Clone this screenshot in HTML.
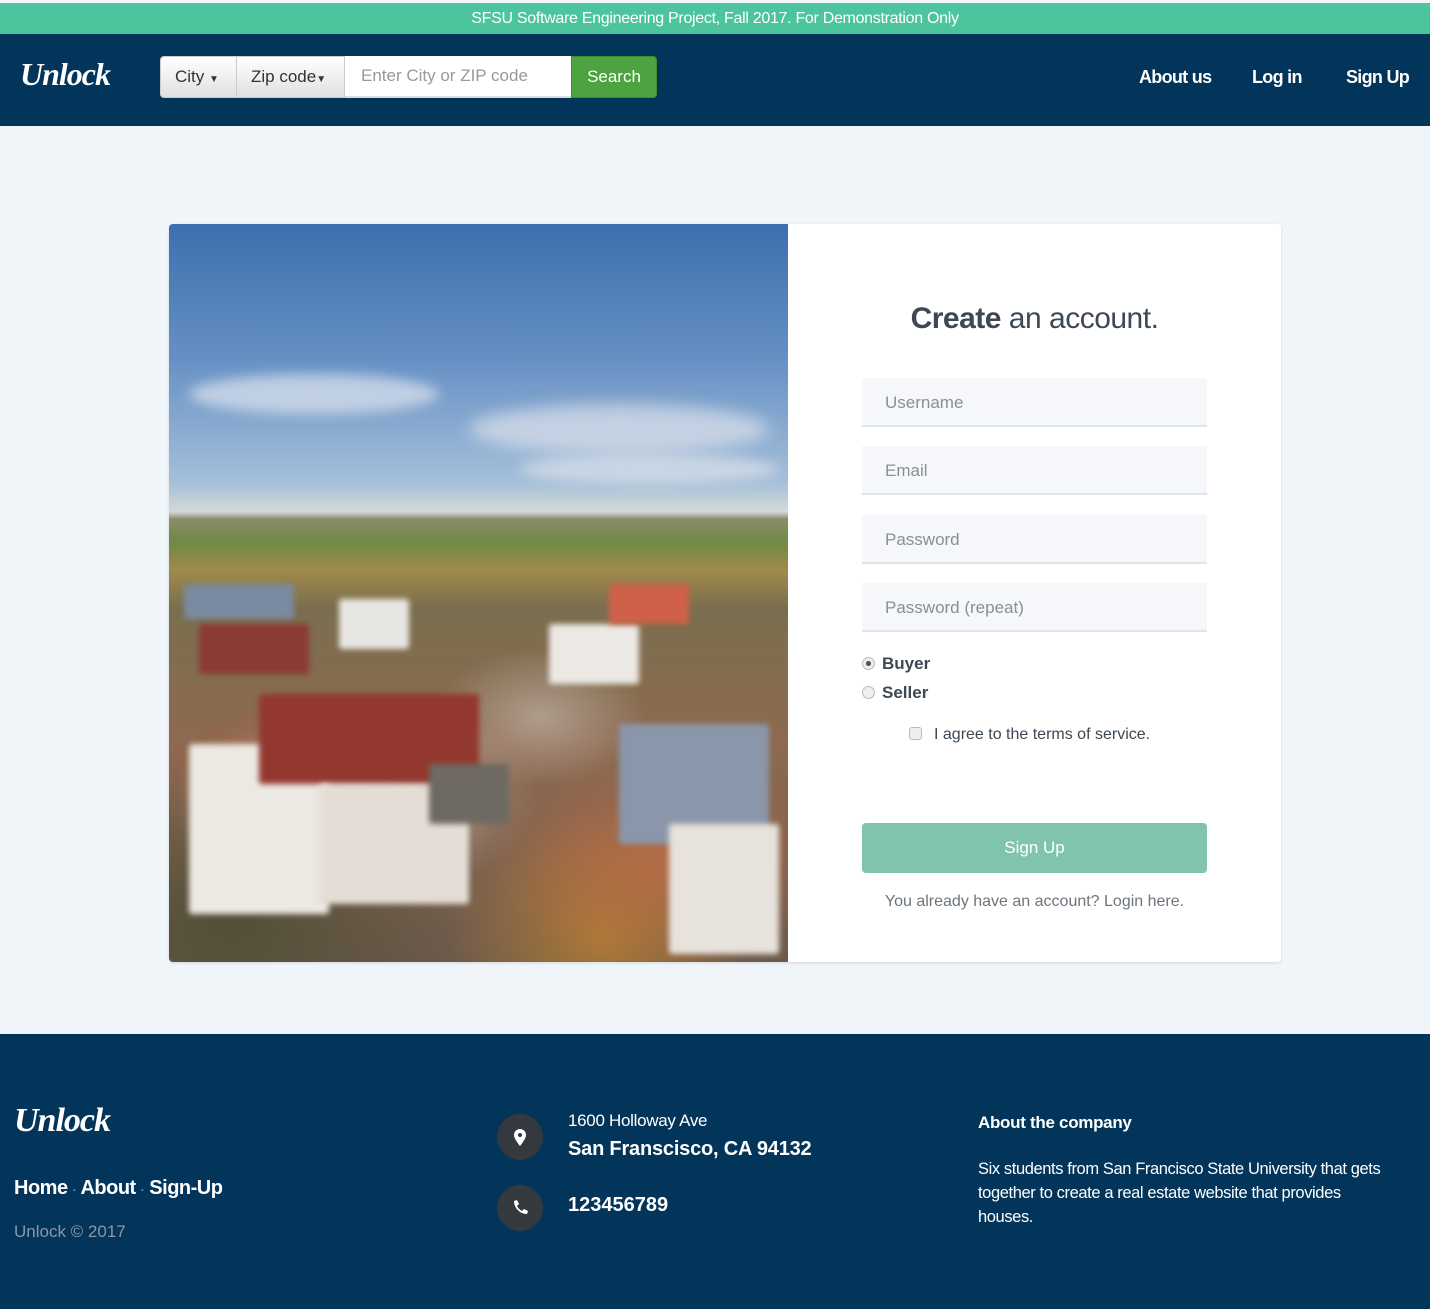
<!DOCTYPE html>
<html><head><meta charset="utf-8"><style>
*{box-sizing:border-box;margin:0;padding:0}
body{width:1430px;height:1309px;background:#f0f5fa;font-family:"Liberation Sans",Arial,sans-serif;position:relative;overflow:hidden}
.banner{position:absolute;top:3px;left:0;width:1430px;height:31px;background:#4cc49d;color:#fff;text-align:center;font-size:16px;line-height:31px;letter-spacing:-0.3px}
.nav{position:absolute;top:34px;left:0;width:1430px;height:92px;background:#033459}
.logo{position:absolute;font-family:"Liberation Serif",serif;font-style:italic;font-weight:bold;color:#fff;font-size:32px;letter-spacing:-1px}
.sb{position:absolute;top:22px;height:42px;font-size:17px;line-height:40px;color:#333}
.btn{background:linear-gradient(#fff,#e0e0e0);border:1px solid #ccc;padding:0 14px}
.nl{position:absolute;top:33px;color:#fff;font-size:18px;font-weight:bold;letter-spacing:-0.7px}
.card{position:absolute;left:169px;top:224px;width:1112px;height:738px;background:#fff;border-radius:4px;box-shadow:0 1px 3px rgba(0,0,0,.12);overflow:hidden}
.img{position:absolute;left:0;top:0;width:619px;height:738px;overflow:hidden;background:linear-gradient(180deg,#3d6fae 0%,#6590c4 18%,#a5bfd9 35%,#d4d8d6 39%,#8a8c6a 40%,#6f8a45 43%,#a08a4a 47%,#7a6e4e 52%,#8e6a50 70%,#6d5a4c 100%)}
.input{position:absolute;left:693px;width:345px;height:49px;background:#f5f7fb;border-bottom:2px solid #dfe5ec;color:#8a8f96;font-size:17px;line-height:49px;padding-left:23px}
.footer{position:absolute;top:1034px;left:0;width:1430px;height:275px;background:#033459;color:#fff}
.circ{position:absolute;left:497px;width:46px;height:46px;border-radius:50%;background:#33393f}
.b{position:absolute;border-radius:3px;filter:blur(3px)}
</style></head><body>
<div class="banner">SFSU Software Engineering Project, Fall 2017. For Demonstration Only</div>
<div class="nav">
 <div class="logo" style="left:20px;top:22px">Unlock</div>
 <div class="sb btn" style="left:160px;width:77px;border-radius:4px 0 0 4px">City <span style="font-size:10px">▼</span></div>
 <div class="sb btn" style="left:236px;width:109px">Zip code<span style="font-size:10px">▼</span></div>
 <div class="sb" style="left:345px;width:226px;background:#fff;color:#999;padding-left:16px;border-bottom:2px solid #ddd">Enter City or ZIP code</div>
 <div class="sb" style="left:571px;width:86px;background:#4ca33f;color:#fff;text-align:center;border-radius:0 4px 4px 0;border:1px solid #3e8f33">Search</div>
 <div class="nl" style="left:1139px">About us</div>
 <div class="nl" style="left:1252px">Log in</div>
 <div class="nl" style="left:1346px">Sign Up</div>
</div>
<div class="card">
 <div class="img">
  <div style="position:absolute;left:20px;top:150px;width:250px;height:40px;border-radius:50%;background:rgba(240,240,245,.6);filter:blur(6px)"></div>
  <div style="position:absolute;left:300px;top:180px;width:300px;height:50px;border-radius:50%;background:rgba(235,235,240,.6);filter:blur(8px)"></div>
  <div style="position:absolute;left:350px;top:230px;width:260px;height:30px;border-radius:50%;background:rgba(230,232,236,.6);filter:blur(6px)"></div>
  <div style="position:absolute;left:0;top:330px;width:619px;height:408px;background:radial-gradient(ellipse at 30% 60%,rgba(240,235,230,.5),transparent 30%),radial-gradient(ellipse at 25% 55%,rgba(160,50,40,.6),transparent 25%),radial-gradient(ellipse at 80% 75%,rgba(220,110,70,.5),transparent 25%),radial-gradient(ellipse at 60% 40%,rgba(230,230,230,.4),transparent 20%),radial-gradient(ellipse at 70% 95%,rgba(210,140,40,.6),transparent 25%),radial-gradient(ellipse at 10% 90%,rgba(60,70,40,.6),transparent 30%)"></div>
  <div class="b" style="left:15px;top:360px;width:110px;height:35px;background:#7a8aa0"></div>
  <div class="b" style="left:170px;top:375px;width:70px;height:50px;background:#e8e6e2"></div>
  <div class="b" style="left:380px;top:400px;width:90px;height:60px;background:#ece8e4"></div>
  <div class="b" style="left:440px;top:360px;width:80px;height:40px;background:#d0604a"></div>
  <div class="b" style="left:30px;top:400px;width:110px;height:50px;background:#8c3a34"></div>
  <div class="b" style="left:20px;top:520px;width:140px;height:170px;background:#ece8e2"></div>
  <div class="b" style="left:90px;top:470px;width:220px;height:90px;background:#93382f"></div>
  <div class="b" style="left:150px;top:560px;width:150px;height:120px;background:#e4ddd6"></div>
  <div class="b" style="left:450px;top:500px;width:150px;height:120px;background:#8a97aa"></div>
  <div class="b" style="left:500px;top:600px;width:110px;height:130px;background:#e7e2dc"></div>
  <div class="b" style="left:260px;top:540px;width:80px;height:60px;background:#6e6a62"></div>
 </div>
 <div style="position:absolute;left:619px;width:493px;top:78px;text-align:center;font-size:30px;color:#3d4852;letter-spacing:-0.5px"><b>Create</b> an account.</div>
 <div class="input" style="top:154px">Username</div>
 <div class="input" style="top:222px">Email</div>
 <div class="input" style="top:291px">Password</div>
 <div class="input" style="top:359px">Password (repeat)</div>
 <div style="position:absolute;left:693px;top:430px;font-size:17px;font-weight:bold;color:#3d4852"><span style="display:inline-block;width:13px;height:13px;border-radius:50%;border:1px solid #bbb;background:radial-gradient(#555 30%,#eee 35%);vertical-align:-1px;margin-right:7px"></span>Buyer</div>
 <div style="position:absolute;left:693px;top:459px;font-size:17px;font-weight:bold;color:#3d4852"><span style="display:inline-block;width:13px;height:13px;border-radius:50%;border:1px solid #bbb;background:#eee;vertical-align:-1px;margin-right:7px"></span>Seller</div>
 <div style="position:absolute;left:740px;top:502px;font-size:16px;color:#3d4852"><span style="display:inline-block;width:13px;height:13px;border-radius:3px;border:1px solid #bbb;background:#eee;vertical-align:-1px;margin-right:12px"></span>I agree to the terms of service.</div>
 <div style="position:absolute;left:693px;top:599px;width:345px;height:50px;background:#80c4ac;border-radius:4px;color:#fff;text-align:center;line-height:50px;font-size:17px">Sign Up</div>
 <div style="position:absolute;left:619px;width:493px;top:669px;text-align:center;font-size:16px;color:#6c757d">You already have an account? Login here.</div>
</div>
<div class="footer">
 <div class="logo" style="left:14px;top:68px;font-size:34px">Unlock</div>
 <div style="position:absolute;left:14px;top:143px;font-size:20px;font-weight:bold;letter-spacing:-0.5px">Home <span style="color:#3ba0c9;font-size:12px">·</span> About <span style="color:#3ba0c9;font-size:12px">·</span> Sign-Up</div>
 <div style="position:absolute;left:14px;top:188px;font-size:17px;color:#8a97a5">Unlock © 2017</div>
 <div class="circ" style="top:80px"><svg width="46" height="46" viewBox="0 0 46 46"><path d="M23 15a6 6 0 0 0-6 6c0 4 6 11 6 11s6-7 6-11a6 6 0 0 0-6-6zm0 4a2 2 0 1 1 0 4a2 2 0 0 1 0-4z" fill="#fff" fill-rule="evenodd"/></svg></div>
 <div class="circ" style="top:151px"><svg width="46" height="46" viewBox="0 0 46 46"><path d="M17 16l3-1 2 4-2 2c1 2 3 4 5 5l2-2 4 2-1 3c-7 0-13-6-13-13z" fill="#fff"/></svg></div>
 <div style="position:absolute;left:568px;top:77px;font-size:17px;letter-spacing:-0.3px">1600 Holloway Ave</div>
 <div style="position:absolute;left:568px;top:104px;font-size:20px;font-weight:bold;letter-spacing:-0.2px">San Franscisco, CA 94132</div>
 <div style="position:absolute;left:568px;top:160px;font-size:20px;font-weight:bold">123456789</div>
 <div style="position:absolute;left:978px;top:79px;font-size:17px;font-weight:bold;letter-spacing:-0.3px">About the company</div>
 <div style="position:absolute;left:978px;top:123px;width:420px;font-size:16.5px;line-height:24px;letter-spacing:-0.4px">Six students from San Francisco State University that gets together to create a real estate website that provides houses.</div>
</div>
</body></html>
